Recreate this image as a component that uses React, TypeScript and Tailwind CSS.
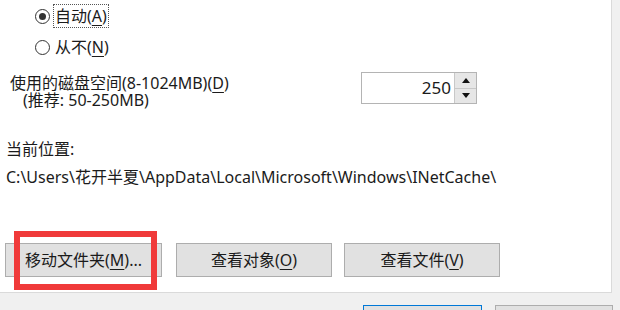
import React from 'react';

const Key = ({ k }: { k: string }) => (
  <span className="underline underline-offset-[3px] decoration-1">{k}</span>
);

const Radio = ({ checked }: { checked?: boolean }) => (
  <div className="w-[15px] h-[15px] rounded-full border border-[#333] bg-white flex items-center justify-center shrink-0">
    {checked && <div className="w-[7px] h-[7px] rounded-full bg-[#333]" />}
  </div>
);

const WinButton = ({ children, className = '' }: { children: React.ReactNode; className?: string }) => (
  <div
    className={`h-[34px] bg-[#e1e1e1] border border-[#adadad] flex items-center justify-center text-[16px] text-[#1b1b1b] ${className}`}
  >
    {children}
  </div>
);

const App = () => {
  return (
    <div className="relative w-[620px] h-[310px] overflow-hidden bg-[#f0f0f0] font-['Noto_Sans','Noto_Sans_CJK_SC',sans-serif] text-[#1b1b1b]">
      {/* main white panel */}
      <div className="w-[612px] h-[293px] bg-white border-r border-b border-[#dadada] flex flex-col">
        {/* radio: auto */}
        <div className="mt-[4px] ml-[35px] h-[24px] flex items-center gap-[4px]">
          <Radio checked />
          <span className="text-[16px] leading-[22px] px-[1px] outline outline-1 outline-dotted outline-[#555]">
            自动(<Key k="A" />)
          </span>
        </div>

        {/* radio: never */}
        <div className="mt-[7px] ml-[35px] h-[24px] flex items-center gap-[4px]">
          <Radio />
          <span className="text-[16px] leading-[22px] px-[1px]">
            从不(<Key k="N" />)
          </span>
        </div>

        {/* disk space */}
        <div className="mt-[13px] flex items-start">
          <div className="w-[361px] pl-[10px] pt-[3px] text-[16px] leading-[17px]">
            <div>
              使用的磁盘空间(8-1024MB)(<Key k="D" />)
            </div>
            <div className="pl-[13px]">(推荐: 50-250MB)</div>
          </div>
          <div className="flex h-[32px] w-[116px] border border-[#b4b4b4] bg-white">
            <div className="flex-1 flex items-center justify-end pr-[3px] text-[17px]">250</div>
            <div className="w-[22px] flex flex-col border-l border-[#c8c8c8] bg-[#e6e6e6]">
              <div className="flex-1 flex items-center justify-center border-b border-[#c8c8c8]">
                <svg width="8" height="5" viewBox="0 0 8 5">
                  <path d="M0 5 L4 0 L8 5 Z" fill="#111" />
                </svg>
              </div>
              <div className="flex-1 flex items-center justify-center">
                <svg width="8" height="5" viewBox="0 0 8 5">
                  <path d="M0 0 L4 5 L8 0 Z" fill="#111" />
                </svg>
              </div>
            </div>
          </div>
        </div>

        {/* current location */}
        <div className="mt-[30px] ml-[6px] text-[16px] leading-[20px]">当前位置:</div>
        <div className="mt-[8px] ml-[6px] text-[16px] leading-[20px] whitespace-nowrap">
          C:\Users\花开半夏\AppData\Local\Microsoft\Windows\INetCache\
        </div>

        {/* action buttons */}
        <div className="mt-[56px] flex">
          <WinButton className="ml-[5px] w-[157px]">
            移动文件夹(<Key k="M" />)...
          </WinButton>
          <WinButton className="ml-[14px] w-[156px]">
            查看对象(<Key k="O" />)
          </WinButton>
          <WinButton className="ml-[12px] w-[156px]">
            查看文件(<Key k="V" />)
          </WinButton>
        </div>
      </div>

      {/* dialog buttons, cut off at bottom */}
      <div className="mt-[12px] flex">
        <div className="ml-[363px] w-[119px] h-[30px] bg-[#e1e1e1] border border-[#0078d7]" />
        <div className="ml-[13px] w-[118px] h-[30px] bg-[#e1e1e1] border border-[#adadad]" />
      </div>

      {/* red annotation box */}
      <div className="absolute left-[14px] top-[231px] w-[143px] h-[59px] border-[6px] border-[#f03a3a]" />
    </div>
  );
};

export default App;
